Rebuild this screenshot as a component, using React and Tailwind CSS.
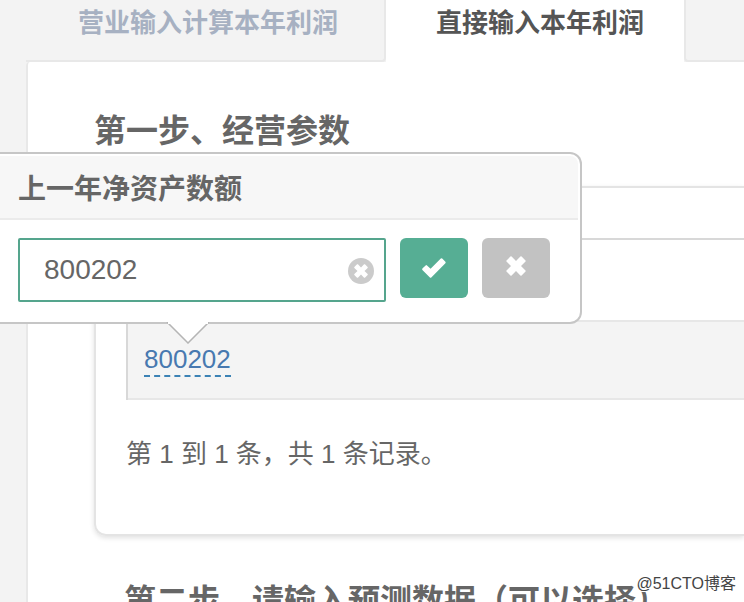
import React, { useState } from "react";

function CheckIcon() {
  return (
    <svg width="26" height="22" viewBox="0 0 26 22" aria-hidden="true">
      <path
        d="M1.4 11.6 4.6 8.4Q5.3 7.8 6 8.4L9.6 11.8 19.8 1.6Q20.5 1 21.2 1.6L24.4 4.8Q25 5.5 24.4 6.2L10.3 20.4Q9.6 21 8.9 20.4L1.4 13Q.8 12.3 1.4 11.6Z"
        fill="#fff"
      />
    </svg>
  );
}

function CrossIcon({ size }) {
  return (
    <svg width={size} height={size} viewBox="0 0 20 20" aria-hidden="true">
      <path
        d="M.5 4.4 4.4.5Q5 0 5.6.5L10 5 14.4.5Q15 0 15.6.5L19.5 4.4Q20 5 19.5 5.6L15 10 19.5 14.4Q20 15 19.5 15.6L15.6 19.5Q15 20 14.4 19.5L10 15 5.6 19.5Q5 20 4.4 19.5L.5 15.6Q0 15 .5 14.4L5 10 .5 5.6Q0 5 .5 4.4Z"
        fill="#fff"
      />
    </svg>
  );
}

function Tabs() {
  return (
    <div role="tablist" className="flex h-[62px] pl-[26px] text-[26px] leading-[46px] font-bold whitespace-nowrap">
      <button
        role="tab"
        aria-selected="false"
        className="flex w-[360px] shrink-0 items-start rounded-br border-r-2 border-b-2 border-[#e8e8e8] pl-[52px] text-[#a7b1c2]"
      >
        营业输入计算本年利润
      </button>
      <button
        role="tab"
        aria-selected="true"
        className="flex w-[298px] shrink-0 items-start bg-white pl-[50px] text-[#555]"
      >
        直接输入本年利润
      </button>
      <div className="grow rounded-bl border-b-2 border-l-2 border-[#e8e8e8]" />
    </div>
  );
}

function EditPopover({ value, onChange }) {
  return (
    <form
      onSubmit={(e) => e.preventDefault()}
      className="absolute top-[152px] left-0 w-[582px] rounded-r-xl border-y-2 border-r-2 border-[#c6c6c6] bg-white pt-0.5"
    >
      <label
        htmlFor="net-assets"
        className="mr-0.5 block rounded-tr-lg border-b-2 border-[#ebebeb] bg-[#f7f7f7] pt-[14px] pb-2 pl-[18px] text-[28px] leading-10 font-bold text-[#666]"
      >
        上一年净资产数额
      </label>
      <div className="flex items-start gap-[14px] pt-[18px] pb-5 pl-[18px]">
        <div className="relative w-[368px]">
          <input
            id="net-assets"
            type="text"
            value={value}
            onChange={(e) => onChange(e.target.value)}
            className="block h-16 w-full rounded-xs border-2 border-[#55a58d] bg-white pr-12 pl-6 text-[28px] text-[#666] outline-none"
          />
          <button
            type="button"
            aria-label="清除"
            onClick={() => onChange("")}
            className="absolute top-5 right-3 flex size-[26px] items-center justify-center rounded-full bg-[#cbcbcb]"
          >
            <CrossIcon size={14} />
          </button>
        </div>
        <button
          type="submit"
          aria-label="确定"
          className="flex h-[60px] w-[68px] items-center justify-center rounded-md bg-[#56ae94]"
        >
          <CheckIcon />
        </button>
        <button
          type="button"
          aria-label="取消"
          className="flex h-[60px] w-[68px] items-center justify-center rounded-md bg-[#c2c2c2] pb-1"
        >
          <CrossIcon size={20} />
        </button>
      </div>
      <svg className="absolute top-full left-[166px]" width="44" height="22" viewBox="0 0 44 22" aria-hidden="true">
        <path d="M1 0H43L22 21Z" fill="#fff" />
        <path d="M1 0 22 21 43 0" fill="none" stroke="#b5b5b5" strokeWidth="1.5" />
        <path d="M2 0H42" stroke="#fff" strokeWidth="4" />
      </svg>
    </form>
  );
}

export default function App() {
  const [value, setValue] = useState("800202");

  return (
    <main className="relative h-screen overflow-hidden bg-[#f3f3f3] font-['Liberation_Sans','Noto_Sans_CJK_SC',sans-serif] text-[#666]">
      <Tabs />
      <section className="ml-[26px] h-full rounded-tl border-l-2 border-[#e8e8e8] bg-white pt-[45px] pl-[66px]">
        <h2 className="text-[32px] leading-12 font-bold">第一步、经营参数</h2>
        <div className="mt-[31px] rounded-l-xl border-y-2 border-l-2 border-[#e4e4e4] pt-[50px] pb-[58px] pl-[30px] shadow-[0_2px_5px_rgba(0,0,0,0.12)]">
          <table className="w-full border-separate border-spacing-0 border-t-2 border-l-2 border-[#d8d8d8]">
            <thead>
              <tr>
                <th aria-label="上一年净资产数额" className="h-20" />
              </tr>
            </thead>
            <tbody>
              <tr>
                <td className="h-20 border-y-2 border-[#e7e7e7] bg-[#f4f4f4] px-4 text-left text-[26px] leading-8">
                  <a href="#net-assets" className="inline-block border-b-2 border-dashed border-[#3b82b5] text-[#4879b0]">
                    800202
                  </a>
                </td>
              </tr>
            </tbody>
          </table>
          <p className="pt-8 text-[26px] leading-11">第 1 到 1 条，共 1 条记录。</p>
        </div>
        <h2 className="mt-[41px] pl-[30px] text-[32px] leading-12 font-bold whitespace-nowrap">
          第二步、请输入预测数据（可以选择）
        </h2>
      </section>
      <EditPopover value={value} onChange={setValue} />
      <small className="absolute right-2 bottom-2 text-[16px] leading-5 text-[#444] [text-shadow:-1px_-1px_0_#fff,1px_-1px_0_#fff,-1px_1px_0_#fff]">
        @51CTO博客
      </small>
    </main>
  );
}
